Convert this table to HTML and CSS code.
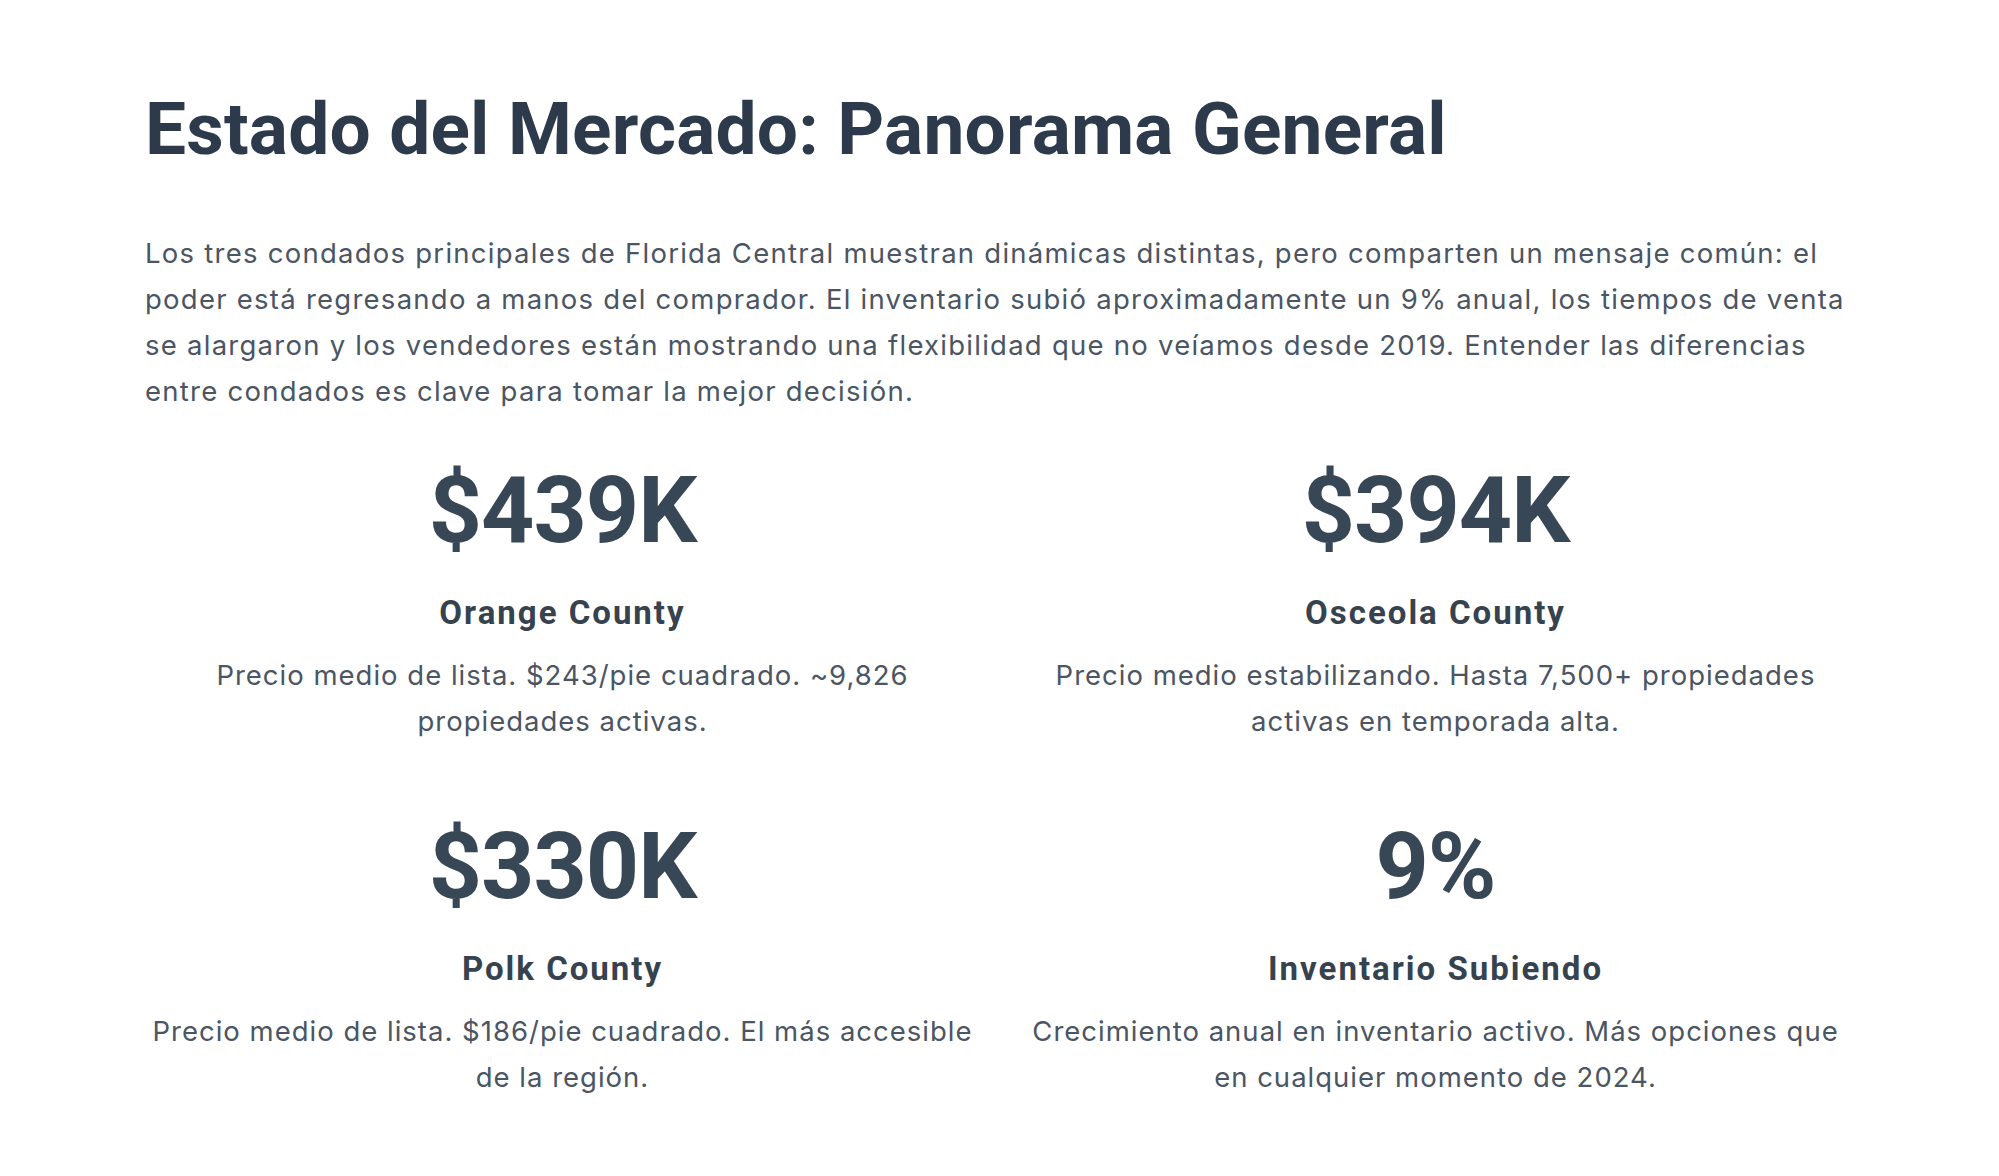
FILE: index.html
```html
<!DOCTYPE html>
<html lang="es">
<head>
<meta charset="utf-8">
<title>Estado del Mercado</title>
<link rel="stylesheet" href="styles.css">
</head>
<body>
<section class="market">
  <h1 class="market-title">Estado del Mercado: Panorama General</h1>
  <p class="market-intro">Los tres condados principales de Florida Central muestran dinámicas distintas, pero comparten un mensaje común: el poder está regresando a manos del comprador. El inventario subió aproximadamente un 9% anual, los tiempos de venta se alargaron y los vendedores están mostrando una flexibilidad que no veíamos desde 2019. Entender las diferencias entre condados es clave para tomar la mejor decisión.</p>
  <div class="stats">
    <div class="stat">
      <div class="stat-value">$439K</div>
      <h3 class="stat-name">Orange County</h3>
      <p class="stat-desc">Precio medio de lista. $243/pie cuadrado. ~9,826 propiedades activas.</p>
    </div>
    <div class="stat">
      <div class="stat-value">$394K</div>
      <h3 class="stat-name">Osceola County</h3>
      <p class="stat-desc">Precio medio estabilizando. Hasta 7,500+ propiedades activas en temporada alta.</p>
    </div>
    <div class="stat">
      <div class="stat-value">$330K</div>
      <h3 class="stat-name">Polk County</h3>
      <p class="stat-desc">Precio medio de lista. $186/pie cuadrado. El más accesible de la región.</p>
    </div>
    <div class="stat">
      <div class="stat-value">9%</div>
      <h3 class="stat-name">Inventario Subiendo</h3>
      <p class="stat-desc">Crecimiento anual en inventario activo. Más opciones que en cualquier momento de 2024.</p>
    </div>
  </div>
</section>
</body>
</html>
```
FILE: styles.css
```css
html, body {
  margin: 0;
  padding: 0;
  background: #ffffff;
}

.market {
  width: 1720px;
  padding: 86px 0 0 145px;
  box-sizing: content-box;
}

.market-title {
  margin: 0 0 56px 0;
  font-family: Roboto, "Liberation Sans", sans-serif;
  font-weight: 700;
  font-size: 73px;
  line-height: 1.2;
  letter-spacing: 0.2px;
  color: #2d3a4b;
}

.market-intro {
  margin: 0 0 50px 0;
  font-family: Inter, "DejaVu Sans", sans-serif;
  font-weight: 400;
  font-size: 27.5px;
  line-height: 46px;
  letter-spacing: 1.25px;
  color: #4b5563;
}

.stats {
  display: grid;
  grid-template-columns: 835px 835px;
  column-gap: 38px;
  row-gap: 76px;
}

.stat {
  display: flex;
  flex-direction: column;
  align-items: center;
  text-align: center;
}

.stat-value {
  font-family: Roboto, "Liberation Sans", sans-serif;
  font-weight: 700;
  font-size: 93px;
  line-height: 1;
  letter-spacing: -1px;
  color: #384755;
  margin-bottom: 38px;
}

.stat-name {
  margin: 0 0 21px 0;
  font-family: Roboto, "Liberation Sans", sans-serif;
  font-weight: 700;
  font-size: 33px;
  line-height: 36px;
  letter-spacing: 2px;
  color: #36434f;
}

.stat-desc {
  margin: 0;
  font-family: Inter, "DejaVu Sans", sans-serif;
  font-weight: 400;
  font-size: 27.5px;
  line-height: 46px;
  letter-spacing: 1px;
  color: #4b5563;
}
```
